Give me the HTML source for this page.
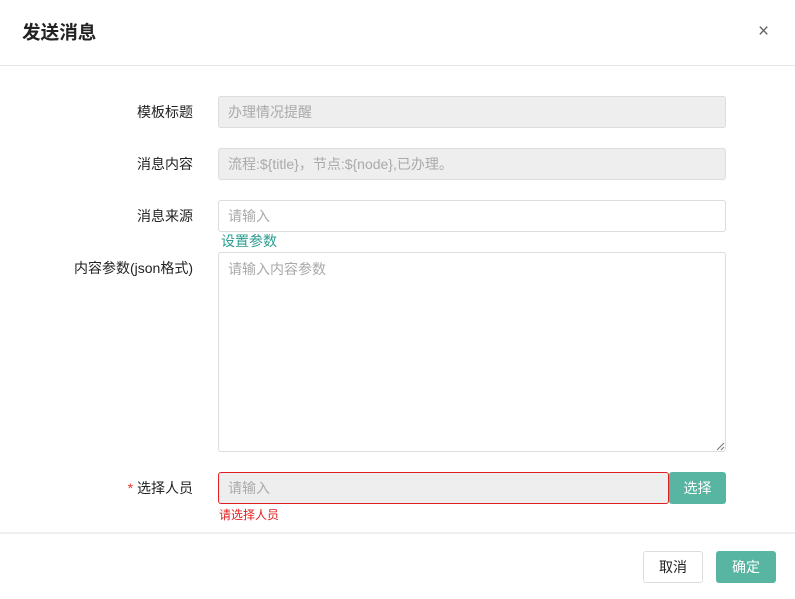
<!DOCTYPE html>
<html><head><meta charset="utf-8"><style>
*{box-sizing:border-box;margin:0;padding:0}
body{width:795px;height:599px;background:#fff;font-family:"Liberation Sans","Noto Sans CJK SC",sans-serif;font-size:14px;color:#333;position:relative;overflow:hidden}
.abs{position:absolute}
.title{left:22px;top:21px;font-size:18.6px;font-weight:bold;color:#222;line-height:24px}
.close{left:758px;top:22px;font-size:19px;color:#666;line-height:19px}
.hl{left:0;width:795px;height:1px;background:#e8e8e8}
.lbl{right:602px;font-size:14px;color:#222;text-align:right;white-space:nowrap;line-height:32px}
.inp{left:218px;width:508px;height:32px;border:1px solid #ddd;border-radius:3px;padding-left:9px;line-height:30px;color:#aaa;font-size:14px}
.dis{background:#eee}
.btn{border-radius:3px;text-align:center;font-size:14px}
</style></head><body>
<div class="abs title">发送消息</div>
<div class="abs close">×</div>
<div class="abs hl" style="top:65px"></div>

<div class="abs lbl" style="top:96px">模板标题</div>
<div class="abs inp dis" style="top:96px">办理情况提醒</div>
<div class="abs lbl" style="top:148px">消息内容</div>
<div class="abs inp dis" style="top:148px">流程:${title}，节点:${node},已办理。</div>
<div class="abs lbl" style="top:200px">消息来源</div>
<div class="abs inp" style="top:200px">请输入</div>
<div class="abs" style="left:221px;top:232px;color:#2a9d8f;font-size:14px;line-height:18px">设置参数</div>
<div class="abs lbl" style="top:252px">内容参数(json格式)</div>
<div class="abs inp" style="top:252px;height:200px;line-height:32px">请输入内容参数</div>
<svg class="abs" style="left:715px;top:441px" width="10" height="10"><path d="M9 2L2 9M9 6L6 9" stroke="#777" stroke-width="1"/></svg>

<div class="abs lbl" style="top:472px"><span style="color:#e33">* </span>选择人员</div>
<div class="abs inp dis" style="top:472px;width:451px;border-color:#e02020">请输入</div>
<div class="abs btn" style="left:669px;top:472px;width:57px;height:32px;line-height:32px;background:#57b5a2;color:#fff">选择</div>
<div class="abs" style="left:219px;top:507px;color:#e02020;font-size:12px;line-height:16px">请选择人员</div>

<div class="abs hl" style="top:532px;height:2px;background:#f0f0f0"></div>
<div class="abs btn" style="left:643px;top:551px;width:60px;height:32px;line-height:30px;border:1px solid #ddd;color:#222">取消</div>
<div class="abs btn" style="left:716px;top:551px;width:60px;height:32px;line-height:32px;background:#57b5a2;color:#fff">确定</div>
</body></html>
